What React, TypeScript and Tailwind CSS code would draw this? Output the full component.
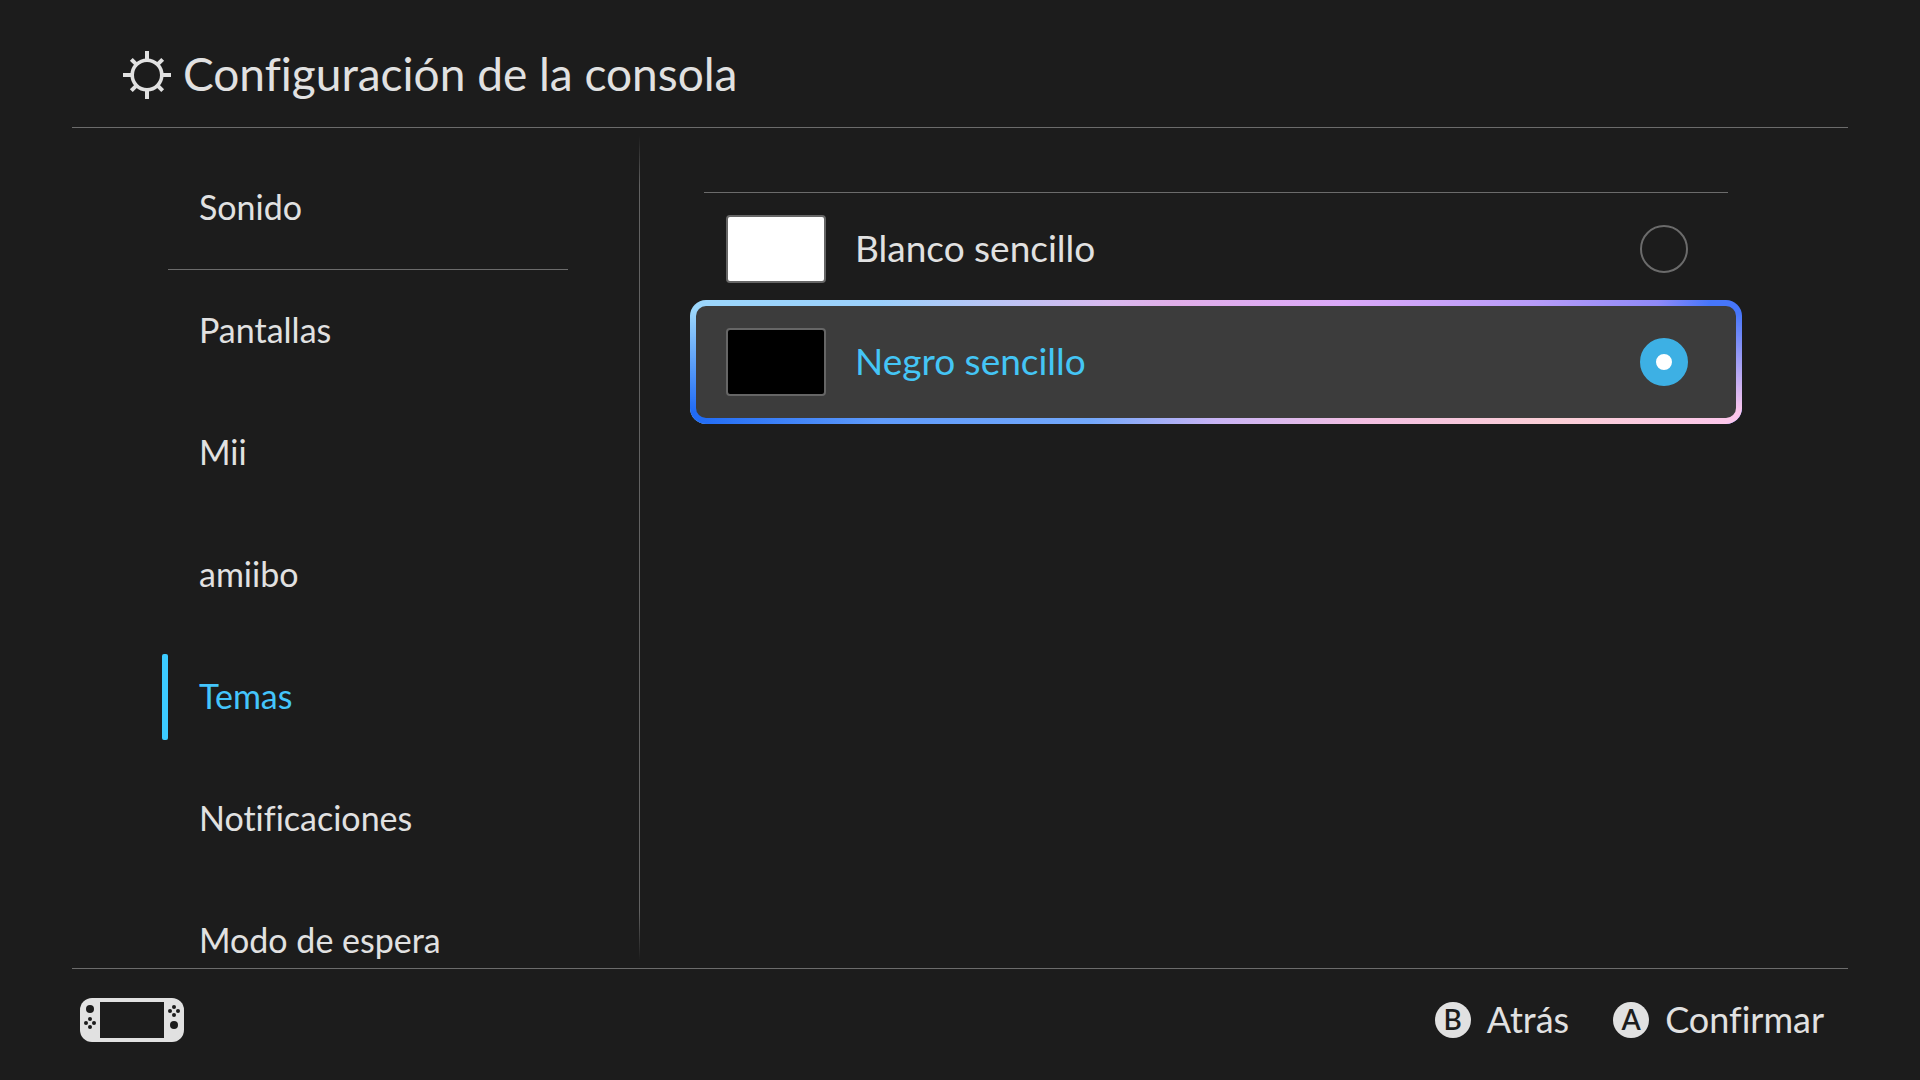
import React, { useState } from "react";

const menuItems = [
  { id: "sonido", label: "Sonido", divider: true },
  { id: "pantallas", label: "Pantallas" },
  { id: "mii", label: "Mii" },
  { id: "amiibo", label: "amiibo" },
  { id: "temas", label: "Temas" },
  { id: "notificaciones", label: "Notificaciones" },
  { id: "espera", label: "Modo de espera" },
];

const themes = [
  { id: "blanco", label: "Blanco sencillo", swatch: "bg-white" },
  { id: "negro", label: "Negro sencillo", swatch: "bg-black" },
];

function SunIcon() {
  return (
    <svg viewBox="0 0 48 48" className="size-12" fill="none" stroke="currentColor" strokeWidth="4" aria-hidden="true">
      <circle cx="24" cy="24" r="14.8" strokeWidth="3.6" />
      {[0, 45, 90, 135, 180, 225, 270, 315].map((a) => (
        <path key={a} d={a % 90 ? "M24 1.8V9" : "M24 0V10"} transform={`rotate(${a} 24 24)`} />
      ))}
    </svg>
  );
}

function ConsoleIcon() {
  return (
    <svg viewBox="0 0 104 44" className="h-11 w-[104px]" aria-hidden="true">
      <rect width="104" height="44" rx="12" fill="#e1e1e1" />
      <g fill="#1c1c1c">
        <rect x="20" y="4" width="64" height="36" />
        <circle cx="10" cy="11" r="4" />
        <circle cx="10" cy="21" r="2" />
        <circle cx="6" cy="25" r="2" />
        <circle cx="14" cy="25" r="2" />
        <circle cx="10" cy="29" r="2" />
        <circle cx="94" cy="9" r="2" />
        <circle cx="90" cy="13" r="2" />
        <circle cx="98" cy="13" r="2" />
        <circle cx="94" cy="17" r="2" />
        <circle cx="94" cy="27" r="4" />
      </g>
    </svg>
  );
}

function HintButton({ letter, label }: { letter: string; label: string }) {
  return (
    <button type="button" className="flex items-center gap-4">
      <span className="flex size-9 items-center justify-center rounded-full bg-[#e1e1e1] pb-0.5 text-[28px] leading-9 font-semibold text-[#1c1c1c]">
        {letter}
      </span>
      <span className="pb-0.5 text-[36px] leading-[48px]">{label}</span>
    </button>
  );
}

function App() {
  const [section, setSection] = useState("temas");
  const [theme, setTheme] = useState("negro");

  return (
    <div className="flex h-screen flex-col overflow-hidden bg-[#1c1c1c] px-[72px] font-['Lato',sans-serif] text-[#e1e1e1] [font-variant-ligatures:none]">
      <header className="flex h-32 shrink-0 items-center gap-3 border-b border-[#6b6b6b] pt-[22px] pl-[51px]">
        <SunIcon />
        <h1 className="pb-0.5 text-[46px] leading-[56px]">Configuración de la consola</h1>
      </header>

      <main className="flex min-h-0 flex-1">
        <nav className="w-[567px] shrink-0 overflow-hidden pt-[19px] pr-[71px] pl-[90px]">
          {menuItems.map((item) => (
            <React.Fragment key={item.id}>
              <button
                type="button"
                onClick={() => setSection(item.id)}
                className={`flex h-[122px] w-full items-center text-left text-[34px] leading-[48px] ${
                  section === item.id ? "text-[#44c5fb]" : ""
                }`}
              >
                <span className={`mr-[31px] h-[86px] w-[6px] rounded-xs ${section === item.id ? "bg-[#3ccbff]" : ""}`} />
                <span className="pb-0.5">{item.label}</span>
              </button>
              {item.divider && <hr className="ml-[6px] border-[#6b6b6b]" />}
            </React.Fragment>
          ))}
        </nav>

        <div className="my-2 w-px shrink-0 bg-[linear-gradient(to_bottom,transparent,#626262_6%,#626262_94%,transparent)]" />

        <section className="flex-1 pt-16 pr-[106px] pl-[50px]">
          <hr className="mx-[14px] border-[#6b6b6b]" />
          <div className="flex flex-col gap-px">
            {themes.map((t) => {
              const active = theme === t.id;
              return (
                <label key={t.id} className="relative flex h-28 items-center pr-[54px] pl-9">
                  {active && (
                    <span className="absolute -inset-y-[6px] inset-x-0 overflow-hidden rounded-2xl bg-[linear-gradient(to_right,#9bd6fb,#9bd0fb_18%,#d8b9ee_40%,#e0aee8_46%,#dba9f8_62%,#b79cf8_80%,#8f8af8_92%,#4676fb_97%)]">
                      <span className="absolute inset-0 bg-[linear-gradient(to_right,#1f6af5,#5f9bfb_18%,#73a8fb_38%,#c9b4f5_50%,#f3bfe2_64%,#fbcfd6_82%,#fcc6ec)] mask-[linear-gradient(to_bottom,transparent_10%,black_90%)]" />
                      <span className="absolute inset-[6px] rounded-[10px] bg-[#3c3c3c]" />
                    </span>
                  )}
                  <span className={`relative h-[68px] w-[100px] rounded-sm border-2 border-[#666] ${t.swatch}`} />
                  <span className={`relative ml-[29px] flex-1 pb-0.5 text-[37px] leading-[48px] ${active ? "text-[#44c5f5]" : ""}`}>
                    {t.label}
                  </span>
                  <input
                    type="radio"
                    name="theme"
                    checked={active}
                    onChange={() => setTheme(t.id)}
                    className="relative size-12 appearance-none rounded-full border-2 border-[#6b6b6b] checked:border-16 checked:border-[#3db0e4] checked:bg-white"
                  />
                </label>
              );
            })}
          </div>
        </section>
      </main>

      <footer className="flex h-28 shrink-0 items-center justify-between border-t border-[#6b6b6b] pr-6 pb-[10px] pl-2">
        <ConsoleIcon />
        <div className="flex items-center gap-11">
          <HintButton letter="B" label="Atrás" />
          <HintButton letter="A" label="Confirmar" />
        </div>
      </footer>
    </div>
  );
}

export default App;
